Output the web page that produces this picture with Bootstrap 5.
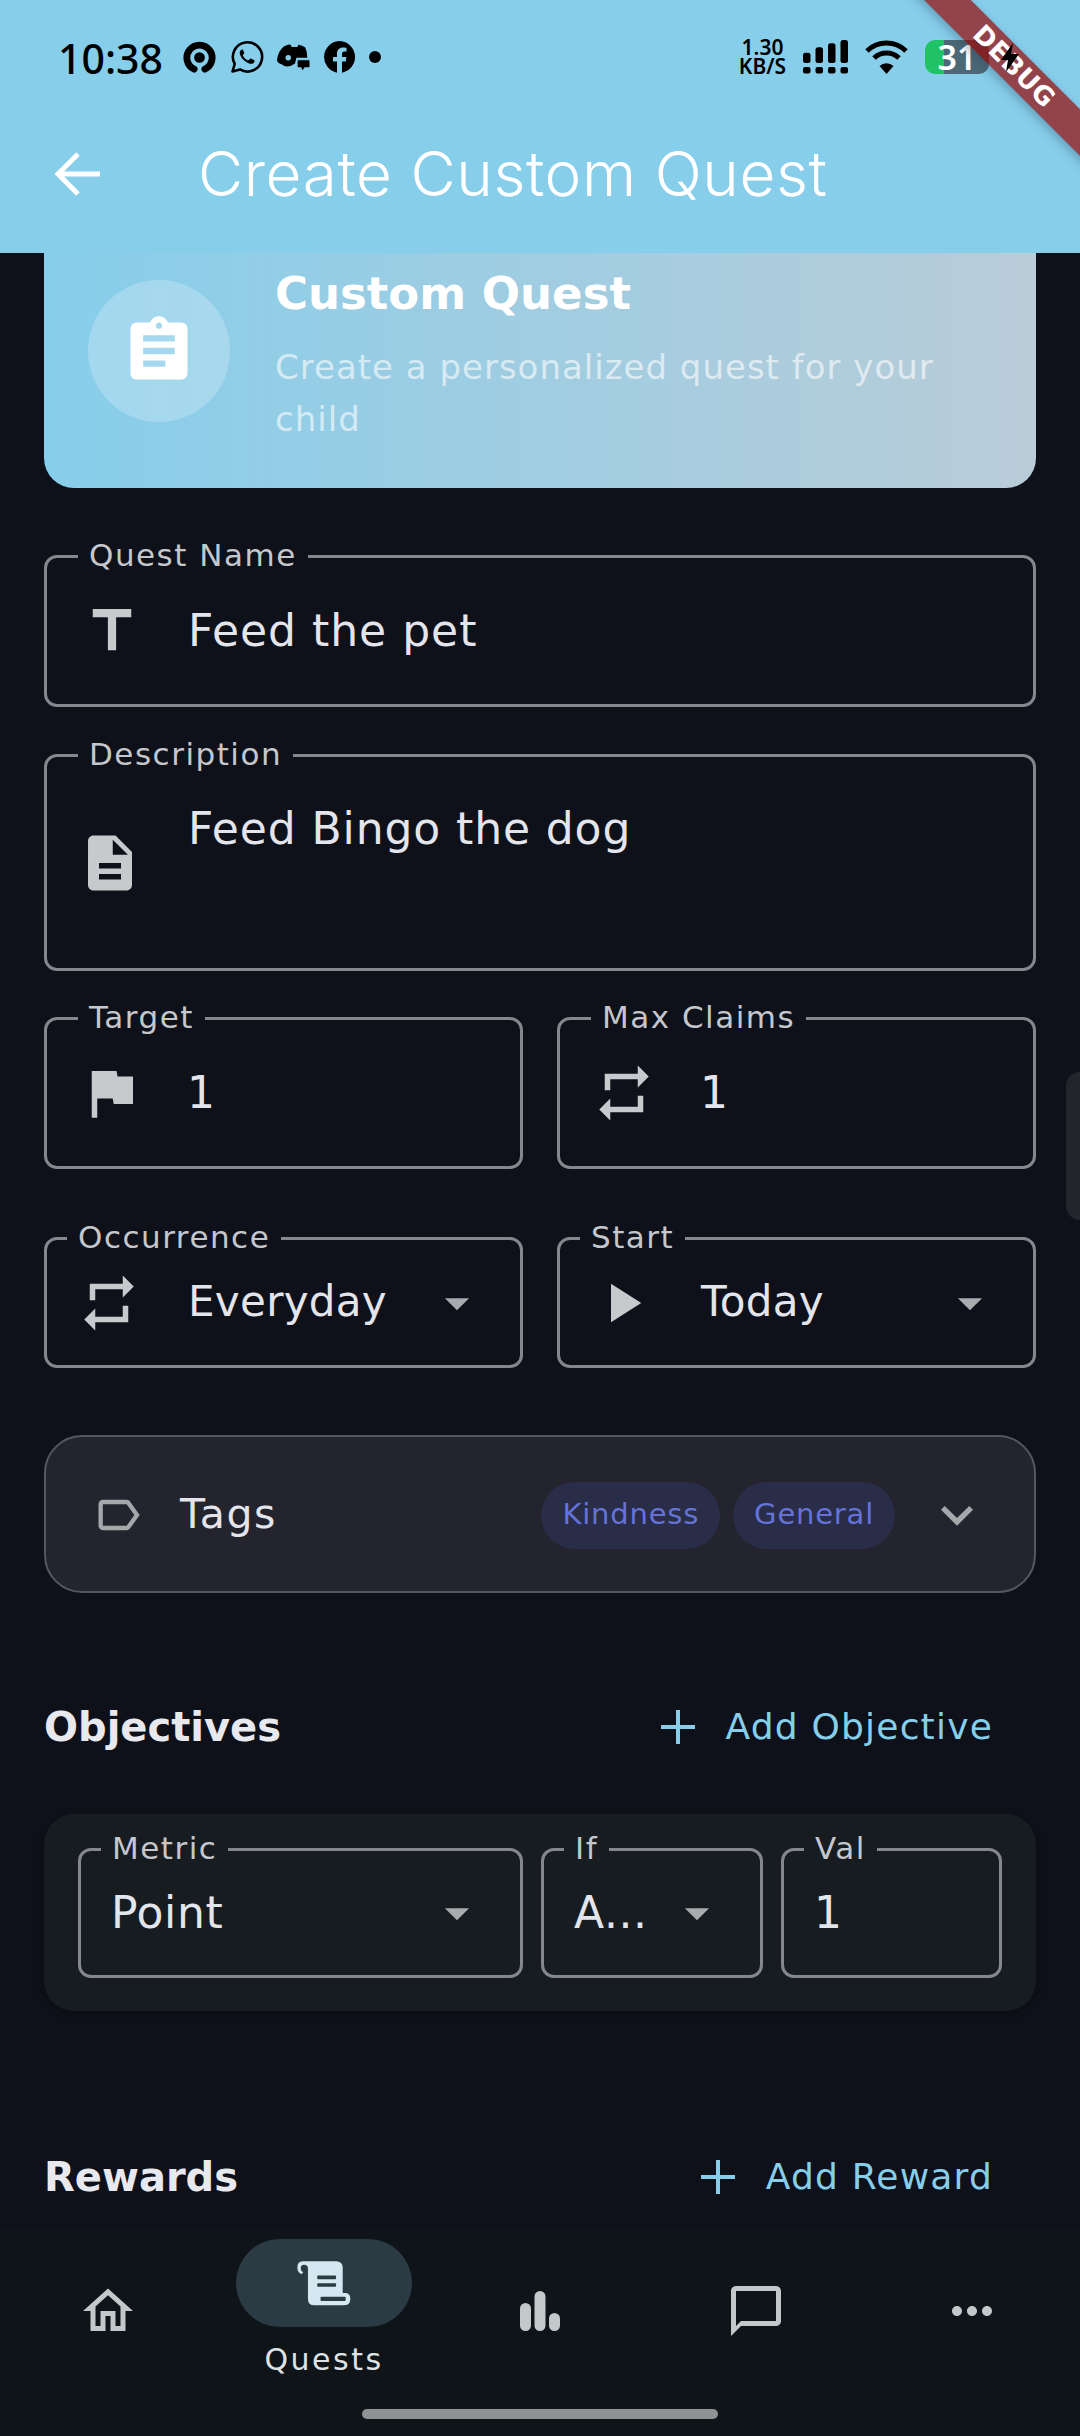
<!doctype html>
<html lang="en">
<head>
<meta charset="utf-8">
<title>Create Custom Quest</title>
<link href="https://cdn.jsdelivr.net/npm/bootstrap@5.3.0/dist/css/bootstrap.min.css" rel="stylesheet">
<style>
html,body{margin:0;background:#0e1119;}
.app-shell{width:1080px;height:2436px;overflow:hidden;position:relative;background:#0e1119;font-family:"DejaVu Sans",sans-serif;color:#e4e5ec;}
.app-top{background:#87ceeb;height:253px;flex:none;}
.status-row{height:113px;padding:38px 0 0 58px;}
.clock{font:500 41px/40px "Noto Sans",sans-serif;color:#000;width:125px;flex:none;}
.noti-icons{gap:13.5px;height:38px;}
.status-right{position:absolute;top:37px;left:738px;height:40px;}
.speed{font:600 21px/19px "Noto Sans",sans-serif;color:#000;text-align:center;width:49px;flex:none;}
.batt{width:64px;height:34px;border-radius:10px;background:linear-gradient(90deg,#1fc264 0 30%,#4c6776 30% 100%);color:#fff;font:600 34px/34px "Noto Sans",sans-serif;text-align:center;margin-left:17px;}
.sig-ic{margin-left:16px;flex:none;}
.wifi-ic{margin-left:17px;flex:none;}
.bolt-ic{position:absolute;left:1000px;top:43px;}
.bar-row{height:140px;padding-bottom:18px;}
.bar-back{width:128px;padding-left:54px;}
.bar-title{font:300 62px/1 "Inter",sans-serif;color:#fff;letter-spacing:.6px;padding-left:70px;}
.debug-band{position:absolute;left:864px;top:50px;width:300px;height:33px;background:rgba(152,9,5,.7);transform:rotate(45deg);color:#fff;font:700 26px/33px "DejaVu Sans",sans-serif;text-align:center;letter-spacing:.5px;box-shadow:0 4px 10px rgba(40,70,90,.35);}
.main-area{flex:1 1 auto;min-height:0;overflow:hidden;padding:0 44px;}
.hero-box{height:235px;border-radius:0 0 30px 30px;background:linear-gradient(90deg,#87ceeb,#b9ccd8);padding:27px 44px 0 44px;gap:45px;}
.hero-disc{width:142px;height:142px;border-radius:50%;background:rgba(255,255,255,.22);flex:none;}
.hero-title{font:700 45px/1.2 "DejaVu Sans",sans-serif;color:#fff;margin-top:-13px;}
.hero-sub{font-size:34px;line-height:52px;color:rgba(255,255,255,.6);margin-top:20px;letter-spacing:1px;}
.out-field{position:relative;border:3px solid #85878d;border-radius:13px;}
.out-label{position:absolute;top:-22px;left:var(--lab,31px);padding:0 11px;background:#0e1119;font-size:31px;line-height:38px;color:#c5c7cc;letter-spacing:1.5px;white-space:nowrap;}
.out-val{font-size:44px;line-height:50px;letter-spacing:1px;color:#e4e5ec;}
.sel-val{font-size:42px;line-height:50px;letter-spacing:.3px;color:#e4e5ec;margin-top:-2px;}
.f-icon{flex:none;width:66px;height:66px;fill:#c6cacd;}
.val-gap{margin-left:43px;}
.name-field{height:152px;margin-top:67px;padding:0 0 0 32px;}
.desc-field{height:217px;margin-top:47px;padding:0 0 0 30px;}
.desc-val{padding-top:47px;margin-left:45px;letter-spacing:.9px;}
.num-field{height:152px;padding-left:31px;}
.gap-x{gap:34px;}
.sel-field{height:131px;}
.sel-field .out-label{--lab:20px;}
.ic-slot{width:141px;padding-left:29px;flex:none;}
.drop-ic{width:58px;height:58px;fill:#a9abae;flex:none;margin-right:34px;}
.tags-box{height:158px;margin-top:67px;border:2.5px solid #55565f;border-radius:38px;background:#23242e;padding:2px 45px 0 46px;}
.tags-name{font-size:41px;letter-spacing:1.5px;margin-left:36px;}
.tag-pill{height:67px;border-radius:34px;background:#2a2d47;color:#6573d9;font-size:29px;padding:0 21px;margin-right:13px;letter-spacing:.8px;}
.tag-chev{margin-left:17px;flex:none;}
.sect-row{height:60px;}
.sect-name{font-weight:700;font-size:40px;color:#e8e9ef;}
.add-link{color:#87ceeb;font-size:36px;letter-spacing:1.2px;gap:31px;padding-right:43px;}
.obj-box{height:197px;margin-top:57px;background:#171c20;border-radius:30px;padding:34px 34px 33px 34px;gap:18px;box-shadow:0 3px 8px rgba(0,0,0,.3);}
.obj-box .out-field{height:130px;}
.obj-box .out-label{background:#171c20;--lab:20px;}
.obj-val{font-size:44px;line-height:50px;letter-spacing:.6px;padding-left:30px;}
.scroll-tab{position:absolute;left:1066px;top:1072px;width:20px;height:148px;background:#22252c;border-radius:14px 0 0 14px;}
.bottom-nav{height:206px;flex:none;background:#0f1418;}
.nav-cell{width:216px;height:160px;}
.nav-pill{width:176px;height:88px;border-radius:44px;background:#2a3b43;margin-top:9px;}
.nav-plain{margin-top:51px;}
.nav-plain svg{fill:#c3c8cb;display:block;}
.nav-text{font-size:30px;line-height:36px;letter-spacing:2.5px;color:#dfe3e6;margin-top:15px;}
.home-bar{width:356px;height:10px;border-radius:5px;background:#8f9293;margin:19px auto 0;}
</style>
</head>
<body>
<div class="app-shell d-flex flex-column">
  <header class="app-top">
    <div class="status-row d-flex align-items-start">
      <div class="clock">10:38</div>
      <div class="noti-icons d-flex align-items-center">
        <svg width="33" height="33" viewBox="0 0 34 34"><path d="M11.500 29A13 13 0 1 1 22.500 29" fill="none" stroke="#000" stroke-width="7" stroke-linecap="round"/><circle cx="17" cy="17" r="5.500"/></svg>
        <svg width="34" height="34" viewBox="0 0 34 34"><path d="M2.500 31.500l2.200-7.600A14.600 14.600 0 1 1 10 29.400z" fill="none" stroke="#000" stroke-width="2.600" stroke-linejoin="round"/><path d="M12 9.500c-1.400.4-2.600 2-2.200 4 .8 4.300 5.700 9.300 10.400 10.200 2.200.4 3.800-.8 4.300-2.300.2-.7 0-1-.5-1.300l-3-1.500c-.5-.2-.9-.1-1.200.3l-1 1.200c-.3.3-.6.3-1 .1-2.100-.9-3.800-2.500-4.800-4.500-.2-.4-.1-.7.100-.9l.9-1.100c.3-.4.3-.7.200-1.100l-1.200-2.700c-.2-.4-.5-.5-1-.4z"/></svg>
        <svg width="33" height="29" viewBox="325 45 97 85"><path d="M345 55Q360 48 365 50L368 57H385L388 50Q400 52 408 58Q414 70 414 88H382L378 105Q360 118 345 112L340 108Q326 105 325 95Q327 70 345 55Z"/><circle cx="358" cy="88" r="8" fill="#87ceeb"/><path d="M387 94H419Q422 94 422 97V115Q422 118 419 118H407L400 128L395 118H387Q384 118 384 115V97Q384 94 387 94Z" stroke="#87ceeb" stroke-width="3"/></svg>
        <svg width="32" height="32" viewBox="0 0 32 32"><path d="M16 0a16 16 0 0 0-3 31.700V20.500H9V16h4v-3.400c0-4 2.400-6.200 6-6.200 1.700 0 3.500.3 3.500.3v3.900h-2c-2 0-2.500 1.200-2.500 2.500V16h4.400l-.7 4.500H18v11.200A16 16 0 0 0 16 0z"/></svg>
        <svg width="12" height="12" viewBox="0 0 12 12"><circle cx="6" cy="6" r="6"/></svg>
      </div>
    </div>
    <div class="status-right d-flex align-items-center">
      <div class="speed">1.30<br>KB/S</div>
      <svg class="sig-ic" width="45" height="34" viewBox="0 0 45 34"><rect x="0" y="12.700" width="7.500" height="10.300" rx="2.500"/><rect x="12.500" y="7.300" width="7.500" height="15.700" rx="2.500"/><rect x="25" y="3.300" width="7.500" height="19.700" rx="2.500"/><rect x="37.500" y="0" width="7.500" height="23" rx="2.500"/><rect x="0" y="27" width="7.500" height="6.500" rx="2"/><rect x="12.500" y="27" width="7.500" height="6.500" rx="2"/><rect x="25" y="27" width="7.500" height="6.500" rx="2"/><rect x="37.500" y="27" width="7.500" height="6.500" rx="2"/></svg>
      <svg class="wifi-ic" width="43" height="34" viewBox="0 0 42 34"><path d="M1.500 11a28 28 0 0 1 39 0" fill="none" stroke="#000" stroke-width="5"/><path d="M8.500 18a18 18 0 0 1 25 0" fill="none" stroke="#000" stroke-width="5"/><path d="M21 34l-7-8a10 10 0 0 1 14 0z"/></svg>
      <div class="batt">31</div>
    </div>
    <div class="bar-row d-flex align-items-center">
      <div class="bar-back d-flex">
        <svg width="46" height="44" viewBox="0 0 46 44" fill="none" stroke="#fff" stroke-width="5"><path d="M46 22H4M24 2L4 22l20 20"/></svg>
      </div>
      <div class="bar-title">Create Custom Quest</div>
    </div>
  </header>
  <div class="debug-band">DEBUG</div>
  <svg class="bolt-ic" width="20" height="29" viewBox="0 0 20 29"><path d="M13 0L1 17h7l-2 12L19 11h-8z"/></svg>
  <main class="main-area">
    <section class="hero-box d-flex">
      <div class="hero-disc d-flex align-items-center justify-content-center">
        <svg width="76" height="76" viewBox="0 0 24 24" fill="#fff"><path d="M19 3h-4.180C14.400 1.840 13.300 1 12 1c-1.300 0-2.400.84-2.820 2H5c-1.100 0-2 .9-2 2v14c0 1.100.9 2 2 2h14c1.100 0 2-.9 2-2V5c0-1.100-.9-2-2-2zm-7 0c.55 0 1 .45 1 1s-.45 1-1 1-1-.45-1-1 .45-1 1-1zm2 14H7v-2h7v2zm3-4H7v-2h10v2zm0-4H7V7h10v2z"/></svg>
      </div>
      <div>
        <div class="hero-title">Custom Quest</div>
        <div class="hero-sub">Create a personalized quest for your child</div>
      </div>
    </section>

    <div class="out-field name-field d-flex align-items-center">
      <span class="out-label">Quest Name</span>
      <svg class="f-icon" viewBox="0 0 24 24"><path d="M5 4v3h5.500v12h3V7H19V4z"/></svg>
      <span class="out-val val-gap">Feed the pet</span>
    </div>

    <div class="out-field desc-field d-flex align-items-center">
      <span class="out-label">Description</span>
      <svg class="f-icon" viewBox="0 0 24 24"><path d="M14 2H6c-1.100 0-1.990.9-1.990 2L4 20c0 1.100.89 2 1.990 2H18c1.100 0 2-.9 2-2V8l-6-6zm2 16H8v-2h8v2zm0-4H8v-2h8v2zm-3-5V3.500L18.500 9H13z"/></svg>
      <span class="out-val align-self-start desc-val">Feed Bingo the dog</span>
    </div>

    <div class="d-flex gap-x" style="margin-top:46px">
      <div class="out-field num-field flex-fill w-50 d-flex align-items-center">
        <span class="out-label">Target</span>
        <svg class="f-icon" viewBox="0 0 24 24"><path d="M14.400 6L14 4H5v17h2v-7h5.600l.4 2h7V6z"/></svg>
        <span class="out-val val-gap">1</span>
      </div>
      <div class="out-field num-field flex-fill w-50 d-flex align-items-center">
        <span class="out-label">Max Claims</span>
        <svg class="f-icon" viewBox="0 0 24 24"><path d="M7 7h10v3l4-4-4-4v3H5v6h2V7zm10 10H7v-3l-4 4 4 4v-3h12v-6h-2v4z"/></svg>
        <span class="out-val val-gap">1</span>
      </div>
    </div>

    <div class="d-flex gap-x" style="margin-top:68px">
      <div class="out-field sel-field flex-fill w-50 d-flex align-items-center">
        <span class="out-label">Occurrence</span>
        <div class="ic-slot"><svg class="f-icon" viewBox="0 0 24 24"><path d="M7 7h10v3l4-4-4-4v3H5v6h2V7zm10 10H7v-3l-4 4 4 4v-3h12v-6h-2v4z"/></svg></div>
        <span class="sel-val flex-grow-1">Everyday</span>
        <svg class="drop-ic" viewBox="0 0 24 24"><path d="M7 10l5 5 5-5z"/></svg>
      </div>
      <div class="out-field sel-field flex-fill w-50 d-flex align-items-center">
        <span class="out-label">Start</span>
        <div class="ic-slot"><svg class="f-icon" viewBox="0 0 24 24"><path d="M8 5v14l11-7z"/></svg></div>
        <span class="sel-val flex-grow-1">Today</span>
        <svg class="drop-ic" viewBox="0 0 24 24"><path d="M7 10l5 5 5-5z"/></svg>
      </div>
    </div>

    <div class="tags-box d-flex align-items-center">
      <svg width="52" height="52" viewBox="0 0 24 24" fill="#a6a7ab"><path d="M17.630 5.840C17.270 5.330 16.670 5 16 5L5 5.010C3.900 5.010 3 5.900 3 7v10c0 1.100.9 1.990 2 1.990L16 19c.67 0 1.270-.33 1.630-.84L22 12l-4.370-6.160zM16 17H5V7h11l3.550 5L16 17z"/></svg>
      <span class="tags-name flex-grow-1">Tags</span>
      <span class="tag-pill d-flex align-items-center">Kindness</span>
      <span class="tag-pill d-flex align-items-center">General</span>
      <svg class="tag-chev" width="64" height="64" viewBox="0 0 24 24" fill="#a6a7ab"><path d="M16.590 8.590L12 13.170 7.410 8.590 6 10l6 6 6-6z"/></svg>
    </div>

    <div class="sect-row d-flex align-items-center justify-content-between" style="margin-top:104px">
      <span class="sect-name">Objectives</span>
      <span class="add-link d-flex align-items-center"><svg width="34" height="34" viewBox="0 0 34 34" fill="#87ceeb"><path d="M15 0h4v15h15v4H19v15h-4V19H0v-4h15z"/></svg>Add Objective</span>
    </div>

    <div class="obj-box d-flex">
      <div class="out-field d-flex align-items-center" style="width:445px">
        <span class="out-label">Metric</span>
        <span class="obj-val flex-grow-1">Point</span>
        <svg class="drop-ic" viewBox="0 0 24 24"><path d="M7 10l5 5 5-5z"/></svg>
      </div>
      <div class="out-field d-flex align-items-center" style="width:222px">
        <span class="out-label">If</span>
        <span class="obj-val flex-grow-1">A...</span>
        <svg class="drop-ic" viewBox="0 0 24 24"><path d="M7 10l5 5 5-5z"/></svg>
      </div>
      <div class="out-field d-flex align-items-center" style="width:221px">
        <span class="out-label">Val</span>
        <span class="obj-val">1</span>
      </div>
    </div>

    <div class="sect-row d-flex align-items-center justify-content-between" style="margin-top:136px">
      <span class="sect-name">Rewards</span>
      <span class="add-link d-flex align-items-center"><svg width="34" height="34" viewBox="0 0 34 34" fill="#87ceeb"><path d="M15 0h4v15h15v4H19v15h-4V19H0v-4h15z"/></svg>Add Reward</span>
    </div>
  </main>
  <div class="scroll-tab"></div>
  <nav class="bottom-nav">
    <div class="d-flex">
      <div class="nav-cell d-flex flex-column align-items-center">
        <div class="nav-plain"><svg width="60" height="60" viewBox="0 0 24 24"><path d="M12 5.690l5 4.500V18h-2v-6H9v6H7v-7.810l5-4.500M12 3L2 12h3v8h6v-6h2v6h6v-8h3L12 3z"/></svg></div>
      </div>
      <div class="nav-cell d-flex flex-column align-items-center">
        <div class="nav-pill d-flex align-items-center justify-content-center">
          <svg width="57" height="48" viewBox="75 30 170 145" fill="#d5e8f2"><path d="M95 37H195Q215 37 215 57V133H225Q238 135 238 150Q238 170 218 170H130Q110 170 110 150V58Q110 47 98 47Q88 47 88 58Q88 66 96 70L90 76Q78 70 78 56Q78 37 95 37Z"/><g fill="#2a3b43"><rect x="138" y="80" width="57" height="11" rx="3"/><rect x="138" y="103" width="57" height="11" rx="3"/><rect x="148" y="144" width="76" height="13" rx="3"/></g></svg>
        </div>
        <div class="nav-text">Quests</div>
      </div>
      <div class="nav-cell d-flex flex-column align-items-center">
        <div class="nav-plain"><svg width="60" height="60" viewBox="0 0 60 60"><rect x="10" y="22" width="11" height="28" rx="5.500"/><rect x="24.500" y="10" width="11" height="40" rx="5.500"/><rect x="39" y="32" width="11" height="18" rx="5.500"/></svg></div>
      </div>
      <div class="nav-cell d-flex flex-column align-items-center">
        <div class="nav-plain"><svg width="60" height="60" viewBox="0 0 24 24"><path d="M20 2H4c-1.100 0-2 .9-2 2v18l4-4h14c1.100 0 2-.9 2-2V4c0-1.100-.9-2-2-2zm0 14H6l-2 2V4h16v12z"/></svg></div>
      </div>
      <div class="nav-cell d-flex flex-column align-items-center">
        <div class="nav-plain"><svg width="60" height="60" viewBox="0 0 24 24"><path d="M6 10c-1.100 0-2 .9-2 2s.9 2 2 2 2-.9 2-2-.9-2-2-2zm12 0c-1.100 0-2 .9-2 2s.9 2 2 2 2-.9 2-2-.9-2-2-2zm-6 0c-1.100 0-2 .9-2 2s.9 2 2 2 2-.9 2-2-.9-2-2-2z"/></svg></div>
      </div>
    </div>
    <div class="home-bar"></div>
  </nav>
</div>
<script src="https://cdn.jsdelivr.net/npm/bootstrap@5.3.0/dist/js/bootstrap.bundle.min.js"></script>
</body>
</html>
